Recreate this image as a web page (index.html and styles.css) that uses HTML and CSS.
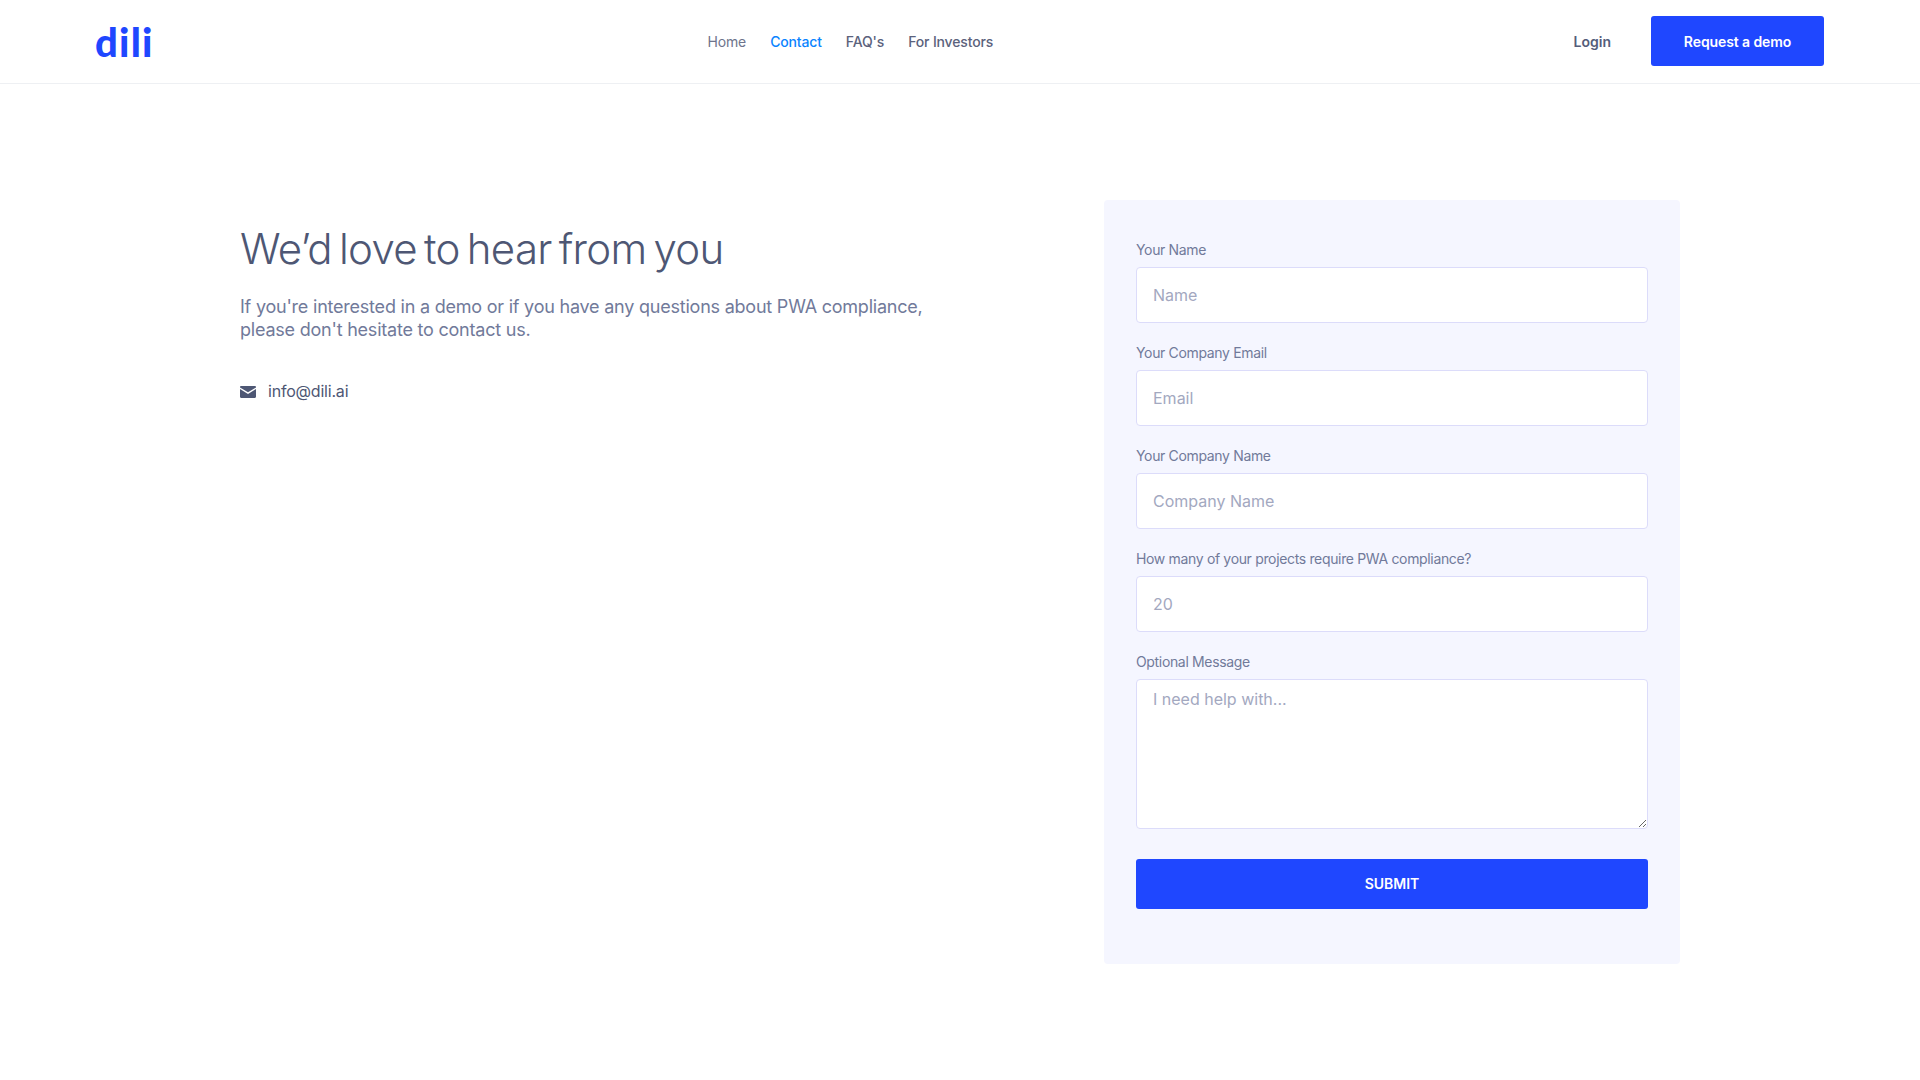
FILE: index.html
```html
<!DOCTYPE html>
<html lang="en">
<head>
<meta charset="utf-8">
<title>Contact - dili</title>
<link rel="stylesheet" href="styles.css">
</head>
<body>
<header class="header">
  <a class="logo" href="#">dili</a>
  <nav class="nav">
    <a class="nav-link nav-home" href="#">Home</a>
    <a class="nav-link nav-active" href="#">Contact</a>
    <a class="nav-link" href="#">FAQ's</a>
    <a class="nav-link" href="#">For Investors</a>
  </nav>
  <div class="actions">
    <a class="login" href="#">Login</a>
    <a class="demo" href="#">Request a demo</a>
  </div>
</header>
<main class="main">
  <section class="intro">
    <h1 class="title">We’d love to hear from you</h1>
    <p class="lead">If you're interested in a demo or if you have any questions about PWA compliance, please don't hesitate to contact us.</p>
    <div class="mail">
      <svg class="mail-icon" viewBox="0 0 16 12" aria-hidden="true"><path d="M1.2 0h13.6C15.500 0 16 .5 16 1.200v.3L8 6.300 0 1.500v-.3C0 .5.5 0 1.200 0zM0 3.100l8 4.800 8-4.800v7.700c0 .7-.5 1.200-1.200 1.200H1.200C.5 12 0 11.500 0 10.800z"/></svg>
      <span>info@dili.ai</span>
    </div>
  </section>
  <form class="card">
    <div class="field"><label class="label">Your Name</label><input class="input" placeholder="Name"></div>
    <div class="field"><label class="label">Your Company Email</label><input class="input" placeholder="Email"></div>
    <div class="field"><label class="label">Your Company Name</label><input class="input" placeholder="Company Name"></div>
    <div class="field"><label class="label">How many of your projects require PWA compliance?</label><input class="input" placeholder="20"></div>
    <div class="field"><label class="label">Optional Message</label><textarea class="input area" placeholder="I need help with..."></textarea></div>
    <button class="submit" type="button">SUBMIT</button>
  </form>
</main>
</body>
</html>
```
FILE: styles.css
```css
* { box-sizing: border-box; }
html, body { margin: 0; padding: 0; }
body { background: #fff; font-family: Inter, "Liberation Sans", sans-serif; color: #4e5774; height: 1080px; overflow: hidden; }
a { text-decoration: none; }

.header { height: 84px; border-bottom: 1px solid #eef0f3; padding: 0 96px 2px 95px; display: grid; grid-template-columns: 613px auto 1fr; align-items: center; }
.logo { font-family: Lato, sans-serif; font-weight: 900; font-size: 40px; line-height: 50px; color: #1f47ff; letter-spacing: 1.2px; margin-top: 2px; }
.nav { display: flex; gap: 24px; margin-top: 2px; margin-left: -0.5px; }
.nav-link { color: #5b627c; font-weight: 500; font-size: 14px; line-height: 20px; letter-spacing: -0.15px; }
.nav-home { color: #6e748c; font-weight: 400; }
.nav-active { color: #0a84ff; }
.actions { display: flex; justify-content: flex-end; align-items: center; gap: 40px; }
.login { font-size: 14px; font-weight: 600; color: #555d7b; margin-top: 2px; }
.demo { width: 173px; height: 50px; background: #1f47ff; color: #fff; font-size: 14px; font-weight: 600; border-radius: 3px; display: flex; align-items: center; justify-content: center; letter-spacing: -0.1px; padding-top: 1px; }

.main { padding: 116px 240px 0; display: flex; justify-content: space-between; align-items: flex-start; }
.intro { width: 720px; padding-top: 21px; }
.title { margin: 0; font-size: 42px; line-height: 56px; font-weight: 300; color: #4e5774; letter-spacing: -0.7px; word-spacing: -4px; }
.lead { margin: 18px 0 0; font-size: 18px; line-height: 23px; color: #717a9a; letter-spacing: -0.22px; }
.mail { margin-top: 38px; display: flex; align-items: center; gap: 12px; font-size: 16px; line-height: 24px; color: #4e5774; letter-spacing: -0.2px; }
.mail-icon { width: 16px; height: 12px; fill: #4e5774; margin-top: 2px; }

.card { width: 576px; height: 764px; background: #f5f6ff; border-radius: 4px; padding: 39px 32px 0; }
.field { margin-bottom: 19px; }
.label { display: block; font-size: 14px; line-height: 21px; color: #717a9a; margin-bottom: 7px; letter-spacing: -0.34px; }
.input { display: block; width: 512px; height: 56px; background: #fff; border: 1px solid #dcdcfa; border-radius: 4px; padding: 0 16px; font-family: Inter, sans-serif; font-size: 16px; color: #4e5774; outline: none; }
.input::placeholder { color: #a3a8bf; opacity: 1; }
.area { height: 150px; padding: 7px 16px; line-height: 24px; resize: vertical; margin-bottom: 30px; }
.submit { display: block; width: 512px; height: 50px; background: #1f47ff; color: #fff; border: 0; border-radius: 3px; padding: 0 0 1px; font-family: Inter, sans-serif; font-size: 14px; font-weight: 600; }
```
